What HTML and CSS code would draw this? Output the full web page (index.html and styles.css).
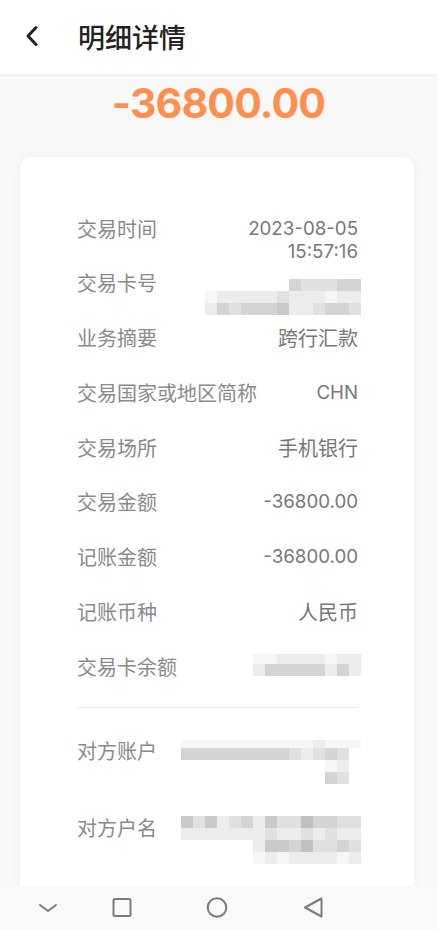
FILE: index.html
```html
<!DOCTYPE html>
<html lang="zh-CN">
<head>
<meta charset="utf-8">
<title>明细详情</title>
<link rel="stylesheet" href="styles.css">
</head>
<body>
<header class="topbar">
  <svg class="back" width="24" height="24" viewBox="0 0 24 24"><path d="M16 3.5 L8 12 L16 20.5" fill="none" stroke="#222" stroke-width="3" stroke-linecap="round" stroke-linejoin="round"/></svg>
  <h1 class="title">明细详情</h1>
</header>

<div class="amount">-36800.00</div>

<main class="card">
  <div class="row row-fixed">
    <span class="label">交易时间</span>
    <span class="value num">2023-08-05<br>15:57:16</span>
  </div>
  <div class="row row-fixed">
    <span class="label">交易卡号</span>
    <div class="mosaic m1">
      <i></i><i></i><i></i><i></i><i></i><i></i><i></i><i class="c3"></i><i class="c2"></i><i class="c2"></i><i class="c2"></i><i class="c3"></i><i class="c3"></i>
      <i class="c0"></i><i class="c1"></i><i class="c1"></i><i class="c1"></i><i class="c1"></i><i class="c1"></i><i class="c2"></i><i class="c1"></i><i class="c1"></i><i class="c1"></i><i class="c0"></i><i class="c1"></i><i class="c1"></i>
      <i class="c1"></i><i class="c3"></i><i class="c2"></i><i class="c3"></i><i class="c3"></i><i class="c3"></i><i class="c4"></i><i class="c1"></i><i class="c1"></i><i class="c2"></i><i class="c3"></i><i class="c3"></i><i class="c2"></i>
    </div>
  </div>
  <div class="row row-fixed">
    <span class="label">业务摘要</span>
    <span class="value">跨行汇款</span>
  </div>
  <div class="row row-fixed">
    <span class="label">交易国家或地区简称</span>
    <span class="value num">CHN</span>
  </div>
  <div class="row row-fixed">
    <span class="label">交易场所</span>
    <span class="value">手机银行</span>
  </div>
  <div class="row row-fixed">
    <span class="label">交易金额</span>
    <span class="value num">-36800.00</span>
  </div>
  <div class="row row-fixed">
    <span class="label">记账金额</span>
    <span class="value num">-36800.00</span>
  </div>
  <div class="row row-fixed">
    <span class="label">记账币种</span>
    <span class="value">人民币</span>
  </div>
  <div class="row row-fixed">
    <span class="label">交易卡余额</span>
    <div class="mosaic m2">
      <i class="c0"></i><i class="c0"></i><i class="c1"></i><i class="c1"></i><i class="c1"></i><i class="c1"></i><i class="c0"></i><i class="c1"></i><i class="c1"></i>
      <i class="c1"></i><i class="c3"></i><i class="c3"></i><i class="c3"></i><i class="c3"></i><i class="c3"></i><i class="c1"></i><i class="c3"></i><i class="c1"></i>
    </div>
  </div>

  <div class="divider"></div>

  <div class="row">
    <span class="label">对方账户</span>
    <div class="mosaic m3">
      <i class="c0"></i><i class="c0"></i><i class="c0"></i><i class="c0"></i><i class="c0"></i><i class="c0"></i><i class="c0"></i><i class="c0"></i><i class="c0"></i><i class="c0"></i><i class="c0"></i><i class="c1"></i><i class="c0"></i><i class="c0"></i><i class="c0"></i>
      <i class="c3"></i><i class="c3"></i><i class="c3"></i><i class="c3"></i><i class="c3"></i><i class="c3"></i><i class="c3"></i><i class="c3"></i><i class="c3"></i><i class="c2"></i><i class="c1"></i><i class="c2"></i><i class="c3"></i><i class="c2"></i>
      <i></i><i></i><i></i><i></i><i></i><i></i><i></i><i></i><i></i><i></i><i></i><i></i><i></i><i class="c0"></i><i class="c1"></i>
      <i></i><i></i><i></i><i></i><i></i><i></i><i></i><i></i><i></i><i></i><i></i><i></i><i></i><i class="c3"></i><i class="c2"></i>
    </div>
  </div>
  <div class="row">
    <span class="label">对方户名</span>
    <div class="mosaic m4">
      <i class="c4"></i><i class="c2"></i><i class="c4"></i><i class="c1"></i><i class="c2"></i><i class="c3"></i><i class="c1"></i><i class="c4"></i><i class="c2"></i><i class="c2"></i><i class="c5"></i><i class="c3"></i><i class="c3"></i><i class="c2"></i><i class="c2"></i>
      <i class="c1"></i><i class="c1"></i><i class="c1"></i><i class="c1"></i><i class="c1"></i><i class="c1"></i><i class="c1"></i><i class="c2"></i><i class="c1"></i><i class="c1"></i><i class="c2"></i><i class="c1"></i><i class="c2"></i><i class="c1"></i><i class="c1"></i>
      <i></i><i></i><i></i><i></i><i></i><i></i><i class="c1"></i><i class="c4"></i><i class="c4"></i><i class="c3"></i><i class="c5"></i><i class="c2"></i><i class="c2"></i><i class="c3"></i><i class="c2"></i>
      <i></i><i></i><i></i><i></i><i></i><i></i><i class="c0"></i><i class="c1"></i><i class="c0"></i><i class="c1"></i><i class="c1"></i><i class="c1"></i><i class="c1"></i><i class="c0"></i><i class="c1"></i>
    </div>
  </div>
</main>

<nav class="navbar">
  <svg class="nav-ic ic-down" width="24" height="24" viewBox="0 0 24 24"><path d="M4 9 L12 15 L20 9" fill="none" stroke="#7a7a7a" stroke-width="1.8" stroke-linecap="round" stroke-linejoin="round"/></svg>
  <svg class="nav-ic ic-square" width="24" height="24" viewBox="0 0 24 24"><rect x="3.5" y="3" width="17" height="17" rx="1.5" fill="none" stroke="#7a7a7a" stroke-width="2"/></svg>
  <svg class="nav-ic ic-circle" width="24" height="24" viewBox="0 0 24 24"><circle cx="12" cy="11.5" r="9.3" fill="none" stroke="#7a7a7a" stroke-width="2"/></svg>
  <svg class="nav-ic ic-back" width="24" height="24" viewBox="0 0 24 24"><path d="M20.5 2.5 L4 11.5 L20.5 20.5 Z" fill="none" stroke="#7a7a7a" stroke-width="2" stroke-linejoin="round"/></svg>
</nav>
</body>
</html>
```

FILE: styles.css
```css
* {
  box-sizing: border-box;
}

html, body {
  margin: 0;
  padding: 0;
}

body {
  width: 437px;
  height: 930px;
  overflow: hidden;
  background: #f8f8f8;
  font-family: Inter, "Noto Sans CJK SC", sans-serif;
}

.topbar {
  height: 74px;
  background: #ffffff;
  display: flex;
  align-items: center;
  padding-left: 20px;
  box-shadow: 0 1px 3px rgba(0, 0, 0, 0.07);
  position: relative;
  z-index: 1;
}

.back {
  display: block;
  margin-top: -2px;
}

.title {
  margin: 0 0 0 34px;
  font-family: "Noto Sans CJK SC", sans-serif;
  font-size: 27px;
  font-weight: 500;
  color: #222222;
  line-height: 36px;
}

.amount {
  margin-top: 1px;
  height: 56px;
  line-height: 56px;
  text-align: center;
  font-family: Inter, sans-serif;
  font-weight: 700;
  font-size: 41px;
  letter-spacing: -0.8px;
  color: #ff8f4f;
}

.card {
  margin: 26px 23px 0 20px;
  background: #ffffff;
  border-radius: 10px;
  box-shadow: 0 0 10px rgba(0, 0, 0, 0.05);
  padding: 43.5px 56px 0 57px;
  min-height: 800px;
}

.row {
  display: flex;
  justify-content: space-between;
  align-items: flex-start;
  padding: 16px 0;
  font-size: 20px;
  line-height: 23px;
}

.row-fixed {
  height: 54.75px;
}

.label {
  color: #8a8a8a;
  font-family: "Noto Sans CJK SC", sans-serif;
  white-space: nowrap;
}

.value {
  color: #777777;
  font-family: "Noto Sans CJK SC", sans-serif;
  text-align: right;
  white-space: nowrap;
}

.value.num {
  font-family: Inter, sans-serif;
  font-size: 18.7px;
}

.divider {
  height: 1px;
  background: #ededed;
  margin: 14px 0 15px;
}

.mosaic {
  display: grid;
  margin-right: -3px;
  filter: blur(0.4px);
}

.mosaic i {
  display: block;
}

.m1 {
  grid-template-columns: repeat(13, 12px);
  grid-auto-rows: 12px;
  margin-top: 8px;
}

.m2 {
  grid-template-columns: repeat(9, 12px);
  grid-template-rows: 10px 12px;
  margin-top: -1px;
}

.m3 {
  grid-template-columns: repeat(15, 12px);
  grid-template-rows: 8px 12px 12px 12px;
  margin-top: 1px;
}

.m4 {
  grid-template-columns: repeat(15, 12px);
  grid-auto-rows: 12px;
}

.mosaic .c0 { background: #f6f6f6; }
.mosaic .c1 { background: #ececec; }
.mosaic .c2 { background: #e0e0e0; }
.mosaic .c3 { background: #d4d4d4; }
.mosaic .c4 { background: #c9c9c9; }
.mosaic .c5 { background: #c0c0c0; }

.navbar {
  position: fixed;
  left: 0;
  bottom: 0;
  width: 437px;
  height: 44px;
  background: #f9f9f9;
  display: flex;
  align-items: center;
  padding-left: 36px;
}

.nav-ic {
  display: block;
  flex: none;
}

.ic-square {
  margin-left: 49.5px;
}

.ic-circle {
  margin-left: 71.5px;
}

.ic-back {
  margin-left: 71.5px;
}
```
